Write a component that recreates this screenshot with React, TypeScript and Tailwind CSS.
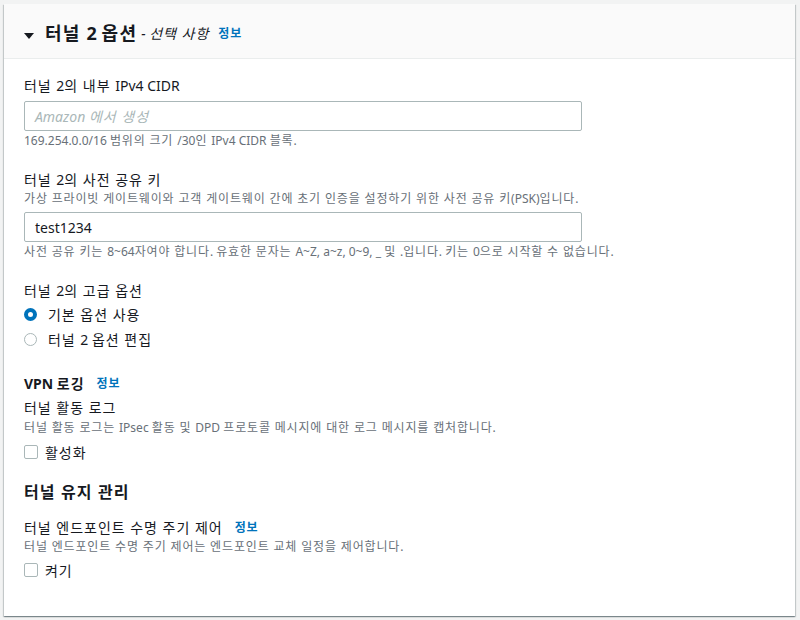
import React from "react";

const font = { fontFamily: '"Noto Sans", "Noto Sans CJK KR", sans-serif' };

// Korean runs are slightly wider in the reference, so widen them a bit
function K({ children }: { children: string }) {
  const parts = children.split(/([\uAC00-\uD7A3][\uAC00-\uD7A3 ]*)/);
  return (
    <span>
      {parts.map((p, i) =>
        /[\uAC00-\uD7A3]/.test(p) ? (
          <span key={i} className="tracking-[0.07em]">{p}</span>
        ) : (
          <React.Fragment key={i}>{p}</React.Fragment>
        )
      )}
    </span>
  );
}

function Info() {
  return (
    <span className="ml-3 text-[12px] font-bold text-[#0073bb]">
      <K>정보</K>
    </span>
  );
}

function Radio({ checked, label }: { checked?: boolean; label: string }) {
  return (
    <div className="flex h-5 items-center">
      {checked ? (
        <span className="h-[13px] w-[13px] rounded-full border-[4px] border-[#0073bb] bg-white" />
      ) : (
        <span className="h-[13px] w-[13px] rounded-full border border-[#aab7b8] bg-white" />
      )}
      <span className="ml-[11px] text-[14px] text-[#16191f]">
        <K>{label}</K>
      </span>
    </div>
  );
}

function Check({ label }: { label: string }) {
  return (
    <div className="flex h-5 items-center">
      <span className="h-[14px] w-[14px] rounded-[2px] border border-[#aab7b8] bg-white" />
      <span className="ml-[7px] text-[14px] text-[#16191f]">
        <K>{label}</K>
      </span>
    </div>
  );
}

export default function App() {
  return (
    <div className="min-h-[620px] bg-[#f2f3f3] p-1" style={font}>
      <div className="h-[612px] w-[791px] bg-white shadow-[0_1px_1px_0_rgba(0,28,36,0.3),1px_1px_1px_0_rgba(0,28,36,0.15),-1px_1px_1px_0_rgba(0,28,36,0.15)]">
        <div className="flex h-[55px] items-center border-b border-[#eaeded] bg-[#fafafa] px-5 pt-[5px]">
          <svg width="10" height="6" viewBox="0 0 10 6" className="mt-[5px]">
            <polygon points="0,0 10,0 5,6" fill="#16191f" />
          </svg>
          <span className="ml-[11px] text-[18px] font-bold text-[#16191f]">
            <K>터널 2 옵션</K>
          </span>
          <span className="ml-1 text-[14px] italic text-[#16191f]">
            <K>- 선택 사항</K>
          </span>
          <span className="ml-[9px] text-[12px] font-bold text-[#0073bb]">
            <K>정보</K>
          </span>
        </div>
        <div className="px-5 pt-[17px]">
          <div className="text-[14px] leading-5 text-[#16191f]">
            <K>터널 2의 내부 IPv4 CIDR</K>
          </div>
          <div className="mt-[5px] flex h-[30px] w-[558px] items-center rounded-[2px] border border-[#aab7b8] px-[10px] text-[14px] italic text-[#aab7b8]">
            <K>Amazon 에서 생성</K>
          </div>
          <div className="mt-[2px] text-[12px] leading-4 text-[#687078]">
            <K>169.254.0.0/16 범위의 크기 /30인 IPv4 CIDR 블록.</K>
          </div>

          <div className="mt-[21px] text-[14px] leading-5 text-[#16191f]">
            <K>터널 2의 사전 공유 키</K>
          </div>
          <div className="mt-px text-[12px] leading-4 text-[#687078]">
            <K>가상 프라이빗 게이트웨이와 고객 게이트웨이 간에 초기 인증을 설정하기 위한 사전 공유 키(PSK)입니다.</K>
          </div>
          <div className="mt-[5px] flex h-[30px] w-[558px] items-center rounded-[2px] border border-[#aab7b8] px-[10px] text-[14px] text-[#16191f]">
            test1234
          </div>
          <div className="mt-[2px] text-[12px] leading-4 text-[#687078]">
            <K>사전 공유 키는 8~64자여야 합니다. 유효한 문자는 A~Z, a~z, 0~9, _ 및 .입니다. 키는 0으로 시작할 수 없습니다.</K>
          </div>

          <div className="mt-[21px] text-[14px] leading-5 text-[#16191f]">
            <K>터널 2의 고급 옵션</K>
          </div>
          <div className="mt-[3px] flex flex-col gap-[5px]">
            <Radio checked label="기본 옵션 사용" />
            <Radio label="터널 2 옵션 편집" />
          </div>

          <div className="mt-[25px] flex items-center text-[14px] font-bold leading-5 text-[#16191f]">
            <K>VPN 로깅</K>
            <Info />
          </div>
          <div className="mt-[4px] text-[14px] leading-5 text-[#16191f]">
            <K>터널 활동 로그</K>
          </div>
          <div className="mt-[2px] text-[12px] leading-4 text-[#687078]">
            <K>터널 활동 로그는 IPsec 활동 및 DPD 프로토콜 메시지에 대한 로그 메시지를 캡처합니다.</K>
          </div>
          <div className="mt-[6px]">
            <Check label="활성화" />
          </div>

          <div className="mt-[19px] text-[16px] font-bold leading-[22px] text-[#16191f]">
            <K>터널 유지 관리</K>
          </div>
          <div className="mt-[15px] flex items-center text-[14px] leading-5 text-[#16191f]">
            <K>터널 엔드포인트 수명 주기 제어</K>
            <Info />
          </div>
          <div className="mt-px text-[12px] leading-4 text-[#687078]">
            <K>터널 엔드포인트 수명 주기 제어는 엔드포인트 교체 일정을 제어합니다.</K>
          </div>
          <div className="mt-[5px]">
            <Check label="켜기" />
          </div>
        </div>
      </div>
    </div>
  );
}
